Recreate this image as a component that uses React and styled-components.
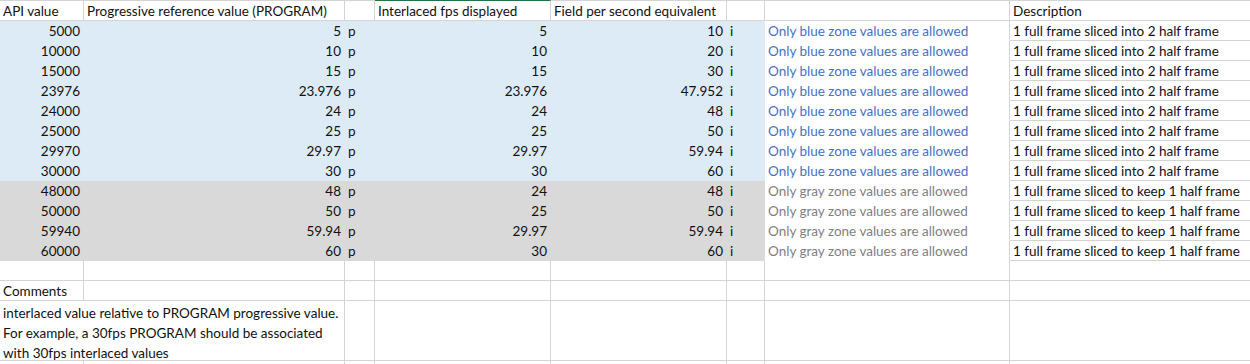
import React from "react";
import styled, { createGlobalStyle } from "styled-components";

const GlobalStyle = createGlobalStyle`
  html, body { margin: 0; padding: 0; background: #ffffff; overflow: hidden; }
  body { font-family: "Lato", "Open Sans", sans-serif; }
`;

const GRID = "#d4d4d4";
const FILLS = { blue: "#ddebf7", gray: "#d9d9d9" };
const TONES = { ink: "#111111", blue: "#4472c4", gray: "#7f7f7f" };

const Sheet = styled.div`
  display: grid;
  grid-template-columns: 84px 261px 30px 176px 176px 38px 245px 260px;
  grid-template-rows: 21px;
  grid-auto-rows: 20px;
  width: 1270px;
  font-family: "Lato", "Open Sans", sans-serif;
  font-size: 13.5px;
  color: ${TONES.ink};
`;

const Cell = styled.div`
  box-sizing: border-box;
  display: flex;
  align-items: flex-end;
  justify-content: ${(p) => (p.$align === "right" ? "flex-end" : "flex-start")};
  padding: 0 3px 0;
  line-height: 17px;
  white-space: nowrap;
  overflow: hidden;
  background: ${(p) => (p.$fill ? FILLS[p.$fill] : "#ffffff")};
  color: ${(p) => TONES[p.$tone || "ink"]};
  border-right: 1px solid ${(p) => (p.$fill ? FILLS[p.$fill] : p.$openRight ? "#ffffff" : GRID)};
  border-bottom: 1px solid ${(p) => (p.$fill ? FILLS[p.$fill] : p.$openBottom ? "#ffffff" : GRID)};
`;

const HeadCell = styled(Cell)`
  border-top: 1px solid ${(p) => (p.$active ? "#217346" : GRID)};
`;

const NoteCell = styled(Cell)`
  grid-column: span ${(p) => p.$cols || 1};
  grid-row: span 3;
  flex-direction: column;
  align-items: flex-start;
  justify-content: flex-start;
  padding: 2px 3px 0;
  line-height: 20px;
`;

const NoteLine = styled.span`
  display: block;
  white-space: nowrap;
`;

const rows = [
  ["5000", "5", "5", "10", "blue"],
  ["10000", "10", "10", "20", "blue"],
  ["15000", "15", "15", "30", "blue"],
  ["23976", "23.976", "23.976", "47.952", "blue"],
  ["24000", "24", "24", "48", "blue"],
  ["25000", "25", "25", "50", "blue"],
  ["29970", "29.97", "29.97", "59.94", "blue"],
  ["30000", "30", "30", "60", "blue"],
  ["48000", "48", "24", "48", "gray"],
  ["50000", "50", "25", "50", "gray"],
  ["59940", "59.94", "29.97", "59.94", "gray"],
  ["60000", "60", "30", "60", "gray"],
];

const EmptyRow = ({ k }) => (
  <>
    {Array.from({ length: 8 }).map((_, i) => (
      <Cell key={k + i} />
    ))}
  </>
);

export default function App() {
  return (
    <>
      <GlobalStyle />
      <Sheet>
        <HeadCell>API value</HeadCell>
        <HeadCell>Progressive reference value (PROGRAM)</HeadCell>
        <HeadCell />
        <HeadCell $active>Interlaced fps displayed</HeadCell>
        <HeadCell>Field per second equivalent</HeadCell>
        <HeadCell />
        <HeadCell />
        <HeadCell>Description</HeadCell>

        {rows.map(([api, prog, inter, field, zone]) => (
          <React.Fragment key={api}>
            <Cell $fill={zone} $align="right">{api}</Cell>
            <Cell $fill={zone} $align="right">{prog}</Cell>
            <Cell $fill={zone}>p</Cell>
            <Cell $fill={zone} $align="right">{inter}</Cell>
            <Cell $fill={zone} $align="right">{field}</Cell>
            <Cell $fill={zone}>i</Cell>
            <Cell $tone={zone} $openBottom>
              Only {zone} zone values are allowed
            </Cell>
            <Cell>
              {zone === "blue"
                ? "1 full frame sliced into 2 half frame"
                : "1 full frame sliced to keep 1 half frame"}
            </Cell>
          </React.Fragment>
        ))}

        <EmptyRow k="e1" />

        <Cell>Comments</Cell>
        <Cell />
        <Cell />
        <Cell />
        <Cell />
        <Cell />
        <Cell />
        <Cell />

        <NoteCell $cols={2}>
          <NoteLine>interlaced value relative to PROGRAM progressive value.</NoteLine>
          <NoteLine>For example, a 30fps PROGRAM should be associated</NoteLine>
          <NoteLine>with 30fps interlaced values</NoteLine>
        </NoteCell>
        <NoteCell />
        <NoteCell />
        <NoteCell />
        <NoteCell />
        <NoteCell />
        <NoteCell />

        <EmptyRow k="e2" />
      </Sheet>
    </>
  );
}
